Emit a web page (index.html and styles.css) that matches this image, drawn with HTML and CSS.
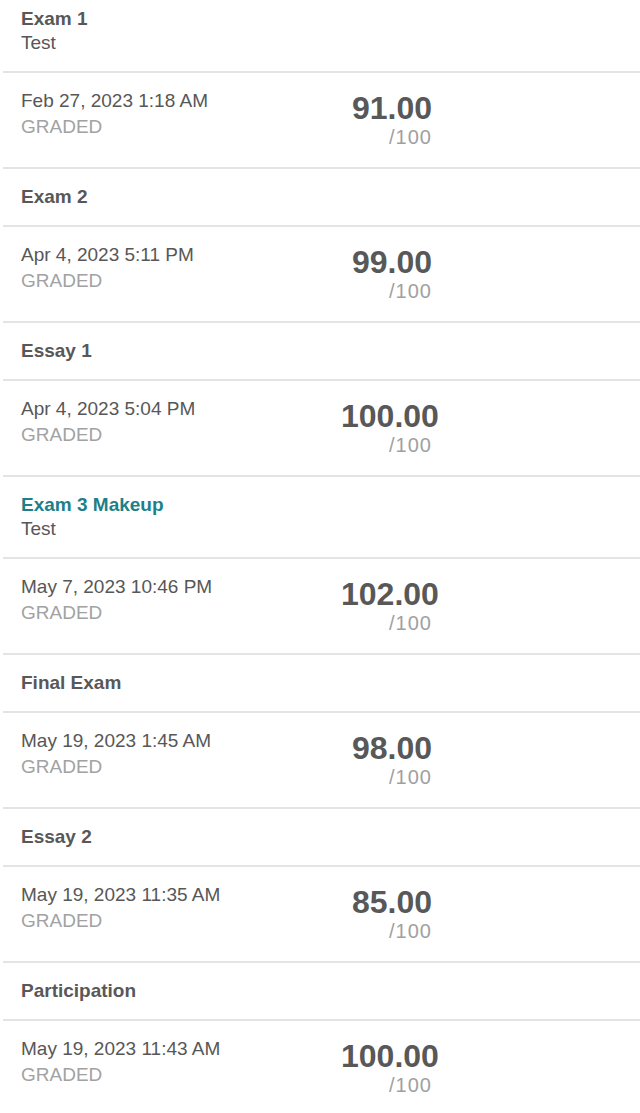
FILE: index.html
```html
<!DOCTYPE html>
<html lang="en">
<head>
  <meta charset="UTF-8" />
  <meta name="viewport" content="width=device-width, initial-scale=1.0" />
  <title>Grades</title>
  <link rel="stylesheet" href="styles.css">
</head>
<body>
  <div class="grades">

    <div class="item-head">
      <div class="item-title">Exam 1</div>
      <div class="item-type">Test</div>
    </div>
    <div class="item-row">
      <div class="item-info">
        <div class="item-date">Feb 27, 2023 1:18 AM</div>
        <div class="item-status">GRADED</div>
      </div>
      <div class="item-score">
        <div class="score-value">91.00</div>
        <div class="score-max">/100</div>
      </div>
    </div>

    <div class="item-head">
      <div class="item-title">Exam 2</div>
    </div>
    <div class="item-row">
      <div class="item-info">
        <div class="item-date">Apr 4, 2023 5:11 PM</div>
        <div class="item-status">GRADED</div>
      </div>
      <div class="item-score">
        <div class="score-value">99.00</div>
        <div class="score-max">/100</div>
      </div>
    </div>

    <div class="item-head">
      <div class="item-title">Essay 1</div>
    </div>
    <div class="item-row">
      <div class="item-info">
        <div class="item-date">Apr 4, 2023 5:04 PM</div>
        <div class="item-status">GRADED</div>
      </div>
      <div class="item-score">
        <div class="score-value">100.00</div>
        <div class="score-max">/100</div>
      </div>
    </div>

    <div class="item-head">
      <div class="item-title link">Exam 3 Makeup</div>
      <div class="item-type">Test</div>
    </div>
    <div class="item-row">
      <div class="item-info">
        <div class="item-date">May 7, 2023 10:46 PM</div>
        <div class="item-status">GRADED</div>
      </div>
      <div class="item-score">
        <div class="score-value">102.00</div>
        <div class="score-max">/100</div>
      </div>
    </div>

    <div class="item-head">
      <div class="item-title">Final Exam</div>
    </div>
    <div class="item-row">
      <div class="item-info">
        <div class="item-date">May 19, 2023 1:45 AM</div>
        <div class="item-status">GRADED</div>
      </div>
      <div class="item-score">
        <div class="score-value">98.00</div>
        <div class="score-max">/100</div>
      </div>
    </div>

    <div class="item-head">
      <div class="item-title">Essay 2</div>
    </div>
    <div class="item-row">
      <div class="item-info">
        <div class="item-date">May 19, 2023 11:35 AM</div>
        <div class="item-status">GRADED</div>
      </div>
      <div class="item-score">
        <div class="score-value">85.00</div>
        <div class="score-max">/100</div>
      </div>
    </div>

    <div class="item-head">
      <div class="item-title">Participation</div>
    </div>
    <div class="item-row">
      <div class="item-info">
        <div class="item-date">May 19, 2023 11:43 AM</div>
        <div class="item-status">GRADED</div>
      </div>
      <div class="item-score">
        <div class="score-value">100.00</div>
        <div class="score-max">/100</div>
      </div>
    </div>

  </div>
</body>
</html>
```

FILE: styles.css
```css
body {
  margin: 0;
  background-color: #fff;
  font-family: "Liberation Sans", Arial, Helvetica, sans-serif;
  color: #575757;
  overflow: hidden;
}
.grades {
  margin-top: -9px;
}
.item-head,
.item-row {
  margin-left: 3px;
  padding-left: 18px;
  border-bottom: 2px solid #e4e4e4;
}
.item-head {
  padding-top: 16px;
  padding-bottom: 16px;
  font-size: 19px;
  line-height: 24px;
}
.item-title {
  font-weight: bold;
  color: #585858;
}
.item-title.link {
  color: #1d8089;
}
.item-row {
  display: flex;
  align-items: flex-start;
  padding-top: 15px;
  padding-bottom: 19px;
}
.item-info {
  width: 320px;
  font-size: 19px;
  line-height: 26px;
}
.item-status {
  color: #a2a2a2;
}
.item-score {
  width: 91px;
  margin-top: 2px;
  text-align: right;
  white-space: nowrap;
}
.score-value {
  font-size: 32px;
  line-height: 36px;
  font-weight: bold;
  color: #585858;
}
.score-max {
  font-size: 20px;
  line-height: 22px;
  letter-spacing: 1px;
  color: #a0a0a0;
}
```
